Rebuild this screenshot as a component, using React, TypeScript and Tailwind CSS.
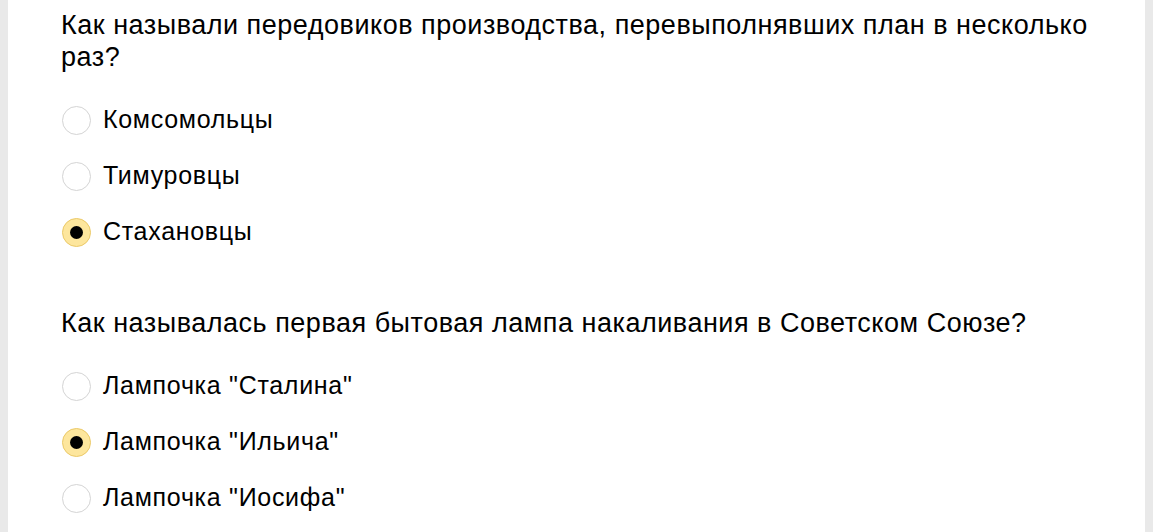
const questions = [
  {
    title:
      "Как называли передовиков производства, перевыполнявших план в несколько раз?",
    options: ["Комсомольцы", "Тимуровцы", "Стахановцы"],
    checked: 2,
  },
  {
    title: "Как называлась первая бытовая лампа накаливания в Советском Союзе?",
    options: ['Лампочка "Сталина"', 'Лампочка "Ильича"', 'Лампочка "Иосифа"'],
    checked: 1,
  },
];

function Radio({ checked }: { checked: boolean }) {
  if (checked) {
    return (
      <span className="flex items-center justify-center w-[29px] h-[29px] shrink-0 rounded-full border border-[#ebc968] bg-[#fde69d]">
        <span className="w-[13px] h-[13px] rounded-full bg-black" />
      </span>
    );
  }
  return (
    <span className="w-[29px] h-[29px] shrink-0 rounded-full border border-[#d4d4d4] bg-white" />
  );
}

export default function App() {
  return (
    <div
      className="min-h-screen bg-[#e9e9e9] px-2"
      style={{ fontFamily: '"Liberation Sans", Arial, sans-serif' }}
    >
      <div className="min-h-screen bg-white pl-[53px] pr-[40px] pt-[9px] text-black">
        {questions.map((q, qi) => (
          <div key={qi} className={qi > 0 ? "mt-[47px]" : ""}>
            <p className="text-[27px] leading-[32px] tracking-[0.52px]">
              {q.title}
            </p>
            <div className="mt-[19px] flex flex-col">
              {q.options.map((opt, oi) => (
                <label
                  key={oi}
                  className="flex h-14 items-center gap-3 pl-px cursor-pointer"
                >
                  <Radio checked={oi === q.checked} />
                  <span className="text-[25px] leading-[30px] tracking-[0.7px] -mt-[3px]">
                    {opt}
                  </span>
                </label>
              ))}
            </div>
          </div>
        ))}
      </div>
    </div>
  );
}
